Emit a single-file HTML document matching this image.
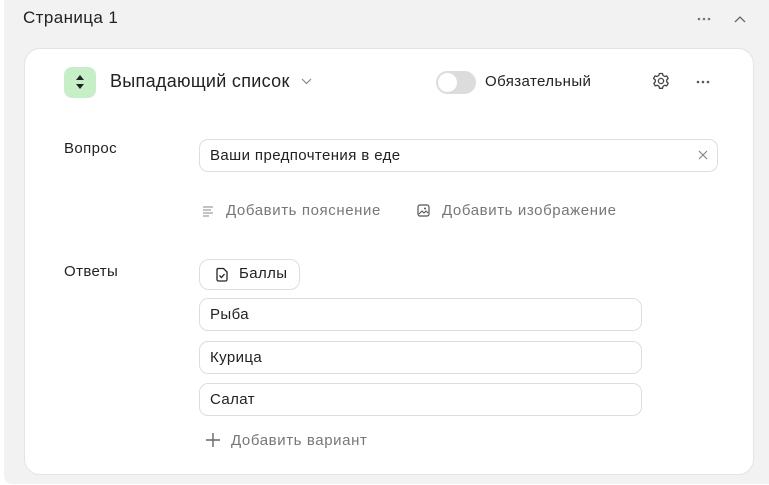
<!DOCTYPE html>
<html><head><meta charset="utf-8"><style>
*{box-sizing:border-box;margin:0;padding:0}
body{width:769px;height:485px;background:#fff;font-family:"Liberation Sans",sans-serif;color:#222;position:relative;overflow:hidden;letter-spacing:0.4px}
.panel{position:absolute;left:4px;top:0;width:770px;height:484px;background:#f2f2f2;border-radius:0 0 0 8px}
.card{position:absolute;left:24px;top:48px;width:730px;height:427px;background:#fff;border:1px solid #e4e4e4;border-radius:16px}
.a{position:absolute;white-space:nowrap}
.inp{position:absolute;border:1px solid #dedede;border-radius:9px;background:#fff;font-size:15px;padding-left:10px;line-height:32px}
.gray{color:#777;font-size:15px;letter-spacing:0.6px}
</style></head><body>
<div class="panel"></div>
<div class="a" style="left:23px;top:8px;font-size:17px;color:#222">Страница 1</div>
<svg class="a" style="left:697px;top:17px" width="14" height="4"><circle cx="2" cy="2" r="1.3" fill="#777"/><circle cx="7" cy="2" r="1.3" fill="#777"/><circle cx="12" cy="2" r="1.3" fill="#777"/></svg>
<svg class="a" style="left:734px;top:15px" width="12" height="8"><path d="M1 7L6 2L11 7" stroke="#666" stroke-width="1.3" fill="none"/></svg>
<div class="card"></div>
<div class="a" style="left:64px;top:67px;width:32px;height:31px;background:#c6efc8;border-radius:8px"></div>
<svg class="a" style="left:74px;top:74px" width="12" height="16"><path d="M6 1L10 6H2Z M6 15L10 10H2Z" fill="#222"/></svg>
<div class="a" style="left:110px;top:71px;font-size:18px;color:#222;letter-spacing:0.3px">Выпадающий список</div>
<svg class="a" style="left:301px;top:78px" width="11" height="7"><path d="M1 1L5.5 5.5L10 1" stroke="#888" stroke-width="1.2" fill="none"/></svg>
<div class="a" style="left:436px;top:71px;width:40px;height:23px;background:#dcdcdc;border-radius:12px"></div>
<div class="a" style="left:438px;top:73px;width:19px;height:19px;background:#fff;border-radius:50%"></div>
<div class="a" style="left:485px;top:73px;font-size:15px">Обязательный</div>
<svg class="a" style="left:652px;top:72px" width="18" height="18" viewBox="0 0 18 18"><circle cx="9" cy="9" r="2.6" stroke="#444" stroke-width="1.3" fill="none"/><path d="M7.5 1.5h3l.5 2 1.7 1 2-.6 1.5 2.6-1.5 1.4v2l1.5 1.4-1.5 2.6-2-.6-1.7 1-.5 2h-3l-.5-2-1.7-1-2 .6-1.5-2.6 1.5-1.4v-2L1.5 6.5 3 3.9l2 .6 1.7-1z" stroke="#444" stroke-width="1.3" fill="none" stroke-linejoin="round"/></svg>
<svg class="a" style="left:696px;top:80px" width="14" height="4"><circle cx="2" cy="2" r="1.3" fill="#555"/><circle cx="7" cy="2" r="1.3" fill="#555"/><circle cx="12" cy="2" r="1.3" fill="#555"/></svg>
<div class="a" style="left:64px;top:140px;font-size:15px">Вопрос</div>
<div class="inp" style="left:199px;top:139px;width:519px;height:33px;line-height:31px">Ваши предпочтения в еде</div>
<svg class="a" style="left:698px;top:150px" width="10" height="10"><path d="M1 1L9 9M9 1L1 9" stroke="#888" stroke-width="1.2"/></svg>
<svg class="a" style="left:202px;top:205px" width="12" height="12"><path d="M1 2H11M1 5H9M1 8H11M1 11H7" stroke="#888" stroke-width="1.1"/></svg>
<div class="a gray" style="left:226px;top:202px">Добавить пояснение</div>
<svg class="a" style="left:417px;top:204px" width="13" height="13"><rect x="1" y="1" width="11" height="11" rx="2" stroke="#555" stroke-width="1.2" fill="none"/><path d="M2 10L5 7L7 9L9 7L11 9" stroke="#555" stroke-width="1.1" fill="none"/><circle cx="8" cy="4.5" r="1" fill="#555"/></svg>
<div class="a gray" style="left:442px;top:202px">Добавить изображение</div>
<div class="a" style="left:64px;top:263px;font-size:15px">Ответы</div>
<div class="inp" style="left:199px;top:259px;width:101px;height:31px;border-radius:10px;padding-left:0"></div>
<svg class="a" style="left:215px;top:267px" width="14" height="15"><path d="M3 1.5H8.5L12 5V12.5a1.5 1.5 0 0 1-1.5 1.5H3.5A1.5 1.5 0 0 1 2 12.5V3A1.5 1.5 0 0 1 3 1.5Z" stroke="#222" stroke-width="1.3" fill="none"/><path d="M4.5 8.5L6.5 10.5L9.5 7" stroke="#222" stroke-width="1.3" fill="none"/></svg>
<div class="a" style="left:239px;top:265px;font-size:15px">Баллы</div>
<div class="inp" style="left:199px;top:298px;width:443px;height:33px">Рыба</div>
<div class="inp" style="left:199px;top:341px;width:443px;height:33px">Курица</div>
<div class="inp" style="left:199px;top:383px;width:443px;height:33px">Салат</div>
<svg class="a" style="left:206px;top:433px" width="14" height="14"><path d="M7 0V14M0 7H14" stroke="#666" stroke-width="1.4"/></svg>
<div class="a gray" style="left:231px;top:432px">Добавить вариант</div>
</body></html>
